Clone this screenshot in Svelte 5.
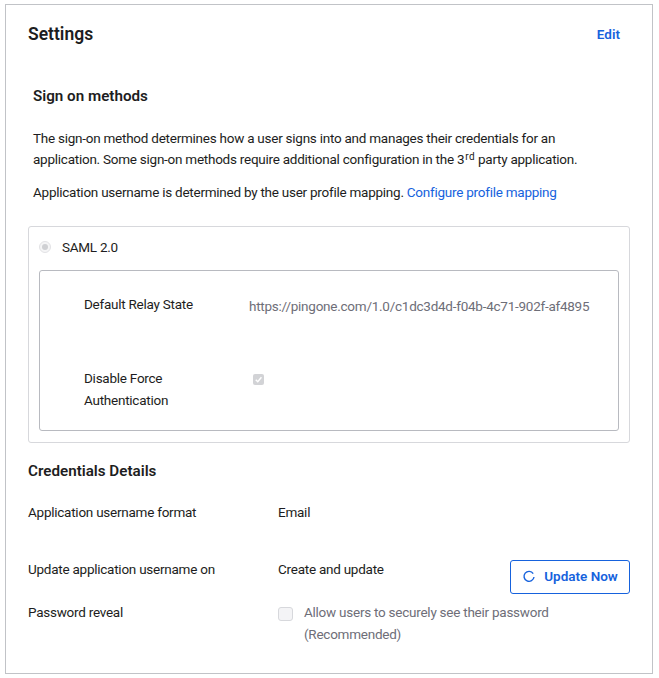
<script>
  const url = 'https://pingone.com/1.0/c1dc3d4d-f04b-4c71-902f-af4895';
</script>

<div class="page">
  <section class="card">
    <header class="card-head">
      <h2>Settings</h2>
      <a class="edit" href="#edit">Edit</a>
    </header>

    <div class="intro">
      <h3>Sign on methods</h3>
      <p class="desc">The sign-on method determines how a user signs into and manages their credentials for an application. Some sign-on methods require additional configuration in the 3<sup>rd</sup> party application.</p>
      <p class="mapping">Application username is determined by the user profile mapping. <a href="#mapping">Configure profile mapping</a></p>
    </div>

    <div class="method">
      <div class="method-title">
        <span class="radio"><span class="dot"></span></span>
        <span>SAML 2.0</span>
      </div>
      <div class="saml">
        <div class="saml-row relay">
          <div class="saml-label">Default Relay State</div>
          <div class="saml-value">{url}</div>
        </div>
        <div class="saml-row force">
          <div class="saml-label">Disable Force Authentication</div>
          <span class="check">
            <svg viewBox="0 0 12 12" width="11" height="11"><path d="M3 6.2 5.2 8.4 9.2 3.6" fill="none" stroke="#fff" stroke-width="1.6"/></svg>
          </span>
        </div>
      </div>
    </div>

    <h3 class="cred-title">Credentials Details</h3>
    <div class="cred-row format">
      <div class="cred-label">Application username format</div>
      <div>Email</div>
    </div>
    <div class="cred-row update">
      <div class="cred-label">Update application username on</div>
      <div class="update-value">Create and update</div>
      <button class="btn">
        <svg viewBox="0 0 14 14" width="14" height="14"><path d="M11.2 3.6A5 5 0 1 0 12 7" fill="none" stroke="#1662dd" stroke-width="1.4"/></svg>
        <span class="btn-text">Update Now</span>
      </button>
    </div>
    <div class="cred-row reveal">
      <div class="cred-label">Password reveal</div>
      <span class="box"></span>
      <div class="reveal-text">Allow users to securely see their password (Recommended)</div>
    </div>
  </section>
</div>

<style>
  :global(body) {
    margin: 0;
    background: #fff;
  }

  .page {
    padding: 4px 6px 4px 5px;
    font-family: Roboto, "Liberation Sans", sans-serif;
    font-size: 13.5px;
    letter-spacing: -0.25px;
    color: #1d1d21;
  }

  .card {
    border: 1px solid #c1c3c7;
    height: 670px;
    box-sizing: border-box;
    padding: 0 22px 0 22px;
  }

  .card-head {
    display: flex;
    justify-content: space-between;
    align-items: center;
    height: 58px;
  }

  h2 {
    margin: 0;
    font-size: 17.5px;
    font-weight: 600;
    letter-spacing: 0;
  }

  .edit {
    margin-right: 10px;
    font-weight: 600;
    letter-spacing: 0;
    color: #1662dd;
    text-decoration: none;
  }

  .intro {
    padding: 0 5px;
  }

  h3 {
    margin: 0;
    font-size: 15.2px;
    font-weight: 600;
    letter-spacing: 0;
  }

  .intro h3 {
    padding-top: 23px;
    line-height: 20px;
  }

  .desc {
    margin: 22px 0 0;
    line-height: 21px;
  }

  sup {
    font-size: 10px;
    line-height: 0;
    vertical-align: 4px;
    letter-spacing: 0.3px;
    margin-left: 1px;
  }

  .mapping {
    margin: 12px 0 0;
    line-height: 21px;
  }

  .mapping a {
    color: #1662dd;
    text-decoration: none;
  }

  .method {
    margin-top: 23px;
    border: 1px solid #d7d8dc;
    border-radius: 3px;
    padding: 10px;
    height: 217px;
    box-sizing: border-box;
  }

  .method-title {
    display: flex;
    align-items: center;
    gap: 11px;
    height: 20px;
  }

  .radio {
    width: 12px;
    height: 12px;
    margin-top: -1px;
    border: 1px solid #e2e2e5;
    border-radius: 50%;
    box-sizing: border-box;
    background: #f5f5f6;
    display: flex;
    align-items: center;
    justify-content: center;
  }

  .dot {
    width: 6px;
    height: 6px;
    border-radius: 50%;
    background: #cfd0d3;
  }

  .saml {
    margin-top: 13px;
    border: 1px solid #b8bac0;
    border-radius: 3px;
    height: 161px;
    box-sizing: border-box;
    padding: 0 44px;
  }

  .saml-row {
    display: flex;
  }

  .relay {
    padding-top: 22px;
    height: 52px;
  }

  .force {
    padding-top: 22px;
  }

  .saml-label {
    width: 165px;
    flex: none;
    line-height: 22px;
  }

  .saml-value {
    margin-top: 2px;
    color: #6e6e78;
    line-height: 22px;
    white-space: nowrap;
  }

  .force .saml-label {
    width: 169px;
    padding-right: 40px;
    box-sizing: border-box;
  }

  .check {
    width: 11px;
    height: 11px;
    margin-top: 7px;
    background: #d2d3d6;
    border-radius: 2px;
    display: flex;
    align-items: center;
    justify-content: center;
  }

  .cred-title {
    margin-top: 18px;
    line-height: 20px;
  }

  .cred-row {
    display: flex;
    line-height: 22px;
  }

  .cred-label {
    width: 250px;
    flex: none;
  }

  .format {
    margin-top: 20px;
  }

  .update {
    margin-top: 35px;
  }

  .update-value {
    flex: 1;
  }

  .btn {
    width: 120px;
    height: 34px;
    margin-top: 2px;
    border: 1px solid #1662dd;
    border-radius: 3px;
    background: #fff;
    color: #1662dd;
    font: inherit;
    font-weight: 600;
    letter-spacing: 0;
    display: flex;
    align-items: center;
    justify-content: center;
    gap: 8px;
    padding: 0;
  }

  .btn-text {
    margin-bottom: 3px;
  }

  .reveal {
    margin-top: 7px;
  }

  .box {
    width: 15px;
    height: 14px;
    margin-top: 6px;
    margin-right: 11px;
    border: 1px solid #d7d8dc;
    border-radius: 3px;
    background: #f4f4f6;
    box-sizing: border-box;
    flex: none;
  }

  .reveal-text {
    width: 300px;
    color: #6e6e78;
  }
</style>
